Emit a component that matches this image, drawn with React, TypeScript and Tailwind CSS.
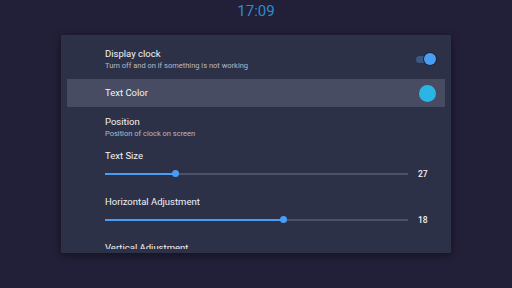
const font = { fontFamily: "Roboto, 'Noto Sans', sans-serif" };

type Item = { title: string; subtitle?: string; highlight?: boolean; control?: "toggle" | "color" };

const items: Item[] = [
  { title: "Display clock", subtitle: "Turn off and on if something is not working", control: "toggle" },
  { title: "Text Color", highlight: true, control: "color" },
  { title: "Position", subtitle: "Position of clock on screen" },
];

const sliders = [
  { label: "Text Size", value: 27, pct: 23.4 },
  { label: "Horizontal Adjustment", value: 18, pct: 59 },
  { label: "Vertical Adjustment", value: 0, pct: 50 },
];

function Toggle() {
  return (
    <div className="relative w-[20px] h-[12px] flex items-center">
      <div className="h-[7px] w-[16px] rounded-full bg-[#3c5782]" />
      <div className="absolute right-0 top-0 w-[12px] h-[12px] rounded-full bg-[#4a9df5] ring-1 ring-[#1f2438]" />
    </div>
  );
}

export default function App() {
  return (
    <div className="w-[512px] h-[288px] bg-[#221f38] overflow-hidden" style={font}>
      <div className="h-[35px] flex justify-center pt-[1px]">
        <span className="text-[15px] leading-[20px] text-[#2e8ccb]">17:09</span>
      </div>
      <div className="ml-[61px] w-[390px] h-[218px] bg-[#2d3147] shadow-[0_2px_8px_rgba(0,0,0,0.45)] flex flex-col pt-[10px] pb-[4px]">
        <div className="flex-1 overflow-hidden">
          <div className="flex flex-col gap-[6px] px-[6px]">
            {items.map((it) => (
              <div
                key={it.title}
                className={`h-[28px] flex items-center pl-[38px] pr-[9px] ${it.highlight ? "bg-[#484c62]" : ""}`}
              >
                <div className="flex-1 flex flex-col">
                  <span className="text-[9.5px] leading-[12px] text-[#f2f3f7]">{it.title}</span>
                  {it.subtitle && (
                    <span className="text-[7.5px] leading-[11px] text-[#b7b9c6]">{it.subtitle}</span>
                  )}
                </div>
                {it.control === "toggle" && <Toggle />}
                {it.control === "color" && <div className="w-[17px] h-[17px] rounded-full bg-[#2bb5e6]" />}
              </div>
            ))}
          </div>
          <div className="flex flex-col pl-[44px] pr-[13px] mt-[6px]">
            {sliders.map((s) => (
              <div key={s.label} className="h-[46px] pt-[3px] flex flex-col gap-[6px]">
                <span className="h-[12px] text-[9.5px] leading-[12px] text-[#f2f3f7]">{s.label}</span>
                <div className="h-[12px] flex items-center">
                  <div className="relative flex-1 h-[2px] bg-[#4e5268]">
                    <div className="absolute left-0 top-0 h-[2px] bg-[#4a9df5]" style={{ width: `${s.pct}%` }} />
                    <div
                      className="absolute top-[-3px] w-[7px] h-[7px] -ml-[3.5px] rounded-full bg-[#4a9df5]"
                      style={{ left: `${s.pct}%` }}
                    />
                  </div>
                  <span className="w-[20px] ml-[10px] text-[8.5px] font-medium text-[#f2f3f7]">{s.value}</span>
                </div>
              </div>
            ))}
          </div>
        </div>
      </div>
    </div>
  );
}
